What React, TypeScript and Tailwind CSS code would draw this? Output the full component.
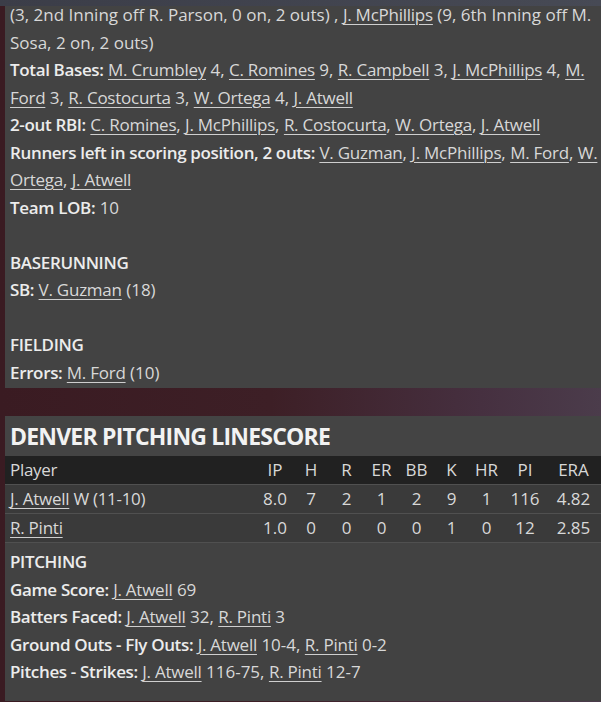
import React from "react";

function L({ children }: { children: React.ReactNode }) {
  return (
    <span className="underline decoration-[1px] underline-offset-[3px] decoration-[#cfcfcf] tracking-[-0.25px]">{children}</span>
  );
}

function B({ children }: { children: React.ReactNode }) {
  return <span className="font-semibold tracking-[-0.35px] text-[#ececec]">{children}</span>;
}

function Line({ children }: { children?: React.ReactNode }) {
  return <div className="h-[27.5px] leading-[27.5px] whitespace-nowrap">{children}</div>;
}

const cols = ["IP", "H", "R", "ER", "BB", "K", "HR", "PI", "ERA"];

const rows: { name: string; extra?: string; vals: string[] }[] = [
  { name: "J. Atwell", extra: " W (11-10)", vals: ["8.0", "7", "2", "1", "2", "9", "1", "116", "4.82"] },
  { name: "R. Pinti", vals: ["1.0", "0", "0", "0", "0", "1", "0", "12", "2.85"] },
];

const grid = "grid grid-cols-[252px_36px_36px_35px_35px_35px_35px_35px_42px_55px]";

export default function App() {
  return (
    <div className="relative min-h-[702px] w-[601px] overflow-hidden bg-[linear-gradient(90deg,#3a1b22_0%,#3d1f26_45%,#463040_80%,#4b3c4b_100%)] font-['Open_Sans',sans-serif] text-[17px] text-[#d8d8d8]">
      <div className="absolute left-0 right-0 top-0 h-[6px] bg-[linear-gradient(90deg,#3b3d48,#474a55)]" />

      <div className="ml-[5px] bg-[#434343] pl-[5px] pt-[1px] pb-[2px] overflow-hidden">
        <Line>
          (3, 2nd Inning off R. Parson, 0 on, 2 outs) , <L>J. McPhillips</L> (9, 6th Inning off M.
        </Line>
        <Line>Sosa, 2 on, 2 outs)</Line>
        <Line>
          <B>Total Bases:</B> <L>M. Crumbley</L> 4, <L>C. Romines</L> 9, <L>R. Campbell</L> 3, <L>J. McPhillips</L> 4, <L>M.</L>
        </Line>
        <Line>
          <L>Ford</L> 3, <L>R. Costocurta</L> 3, <L>W. Ortega</L> 4, <L>J. Atwell</L>
        </Line>
        <Line>
          <B>2-out RBI:</B> <L>C. Romines</L>, <L>J. McPhillips</L>, <L>R. Costocurta</L>, <L>W. Ortega</L>, <L>J. Atwell</L>
        </Line>
        <Line>
          <B>Runners left in scoring position, 2 outs:</B> <L>V. Guzman</L>, <L>J. McPhillips</L>, <L>M. Ford</L>, <L>W.</L>
        </Line>
        <Line>
          <L>Ortega</L>, <L>J. Atwell</L>
        </Line>
        <Line>
          <B>Team LOB:</B> 10
        </Line>
        <Line />
        <Line>
          <B>BASERUNNING</B>
        </Line>
        <Line>
          <B>SB:</B> <L>V. Guzman</L> (18)
        </Line>
        <Line />
        <Line>
          <B>FIELDING</B>
        </Line>
        <Line>
          <B>Errors:</B> <L>M. Ford</L> (10)
        </Line>
      </div>

      <div className="h-[28px]" />

      <div className="ml-[5px] bg-[#424242] overflow-hidden">
        <div className="flex h-[40px] items-center bg-[#444444] pl-[5px] text-[23px] font-bold tracking-[-0.8px] text-[#f2f2f2]">
          DENVER PITCHING LINESCORE
        </div>
        <div className={`${grid} h-[28px] items-center bg-[#212121] leading-[28px]`}>
          <div className="pl-[5px] tracking-[-0.3px]">Player</div>
          {cols.map((c) => (
            <div key={c} className="text-center">{c}</div>
          ))}
        </div>
        {rows.map((r) => (
          <div key={r.name} className={`${grid} h-[29px] items-center border-t border-[#505050] bg-[#3a3a3a] leading-[28px]`}>
            <div className="pl-[5px] whitespace-nowrap tracking-[-0.3px]">
              <L>{r.name}</L>
              {r.extra}
            </div>
            {r.vals.map((v, i) => (
              <div key={i} className="text-center">{v}</div>
            ))}
          </div>
        ))}
        <div className="border-t border-[#505050] pl-[5px] pt-[5px] pb-[15px]">
          <Line>
            <B>PITCHING</B>
          </Line>
          <Line>
            <B>Game Score:</B> <L>J. Atwell</L> 69
          </Line>
          <Line>
            <B>Batters Faced:</B> <L>J. Atwell</L> 32, <L>R. Pinti</L> 3
          </Line>
          <Line>
            <B>Ground Outs - Fly Outs:</B> <L>J. Atwell</L> 10-4, <L>R. Pinti</L> 0-2
          </Line>
          <Line>
            <B>Pitches - Strikes:</B> <L>J. Atwell</L> 116-75, <L>R. Pinti</L> 12-7
          </Line>
        </div>
      </div>
    </div>
  );
}
